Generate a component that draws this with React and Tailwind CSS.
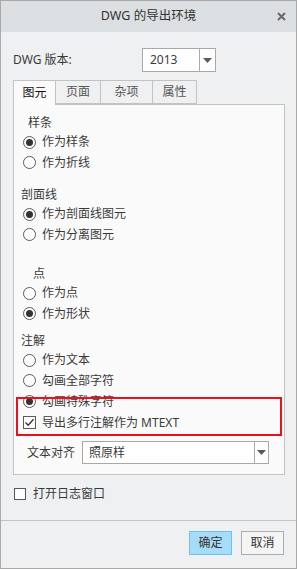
import React from "react";

const font = { fontFamily: '"Noto Sans", "Noto Sans CJK SC", sans-serif' };

function Radio({ checked }) {
  return (
    <span className="flex h-[13px] w-[13px] shrink-0 items-center justify-center rounded-full border border-[#5a5a5a] bg-white">
      {checked && <span className="h-[7px] w-[7px] rounded-full bg-[#333]" />}
    </span>
  );
}

function Check({ checked }) {
  return (
    <span className="flex h-[13px] w-[13px] shrink-0 items-center justify-center border border-[#5a5a5a] bg-white">
      {checked && (
        <svg width="11" height="11" viewBox="0 0 11 11">
          <polyline points="1.5,5.5 4.2,8.3 9.5,2.2" fill="none" stroke="#333" strokeWidth="1.3" />
        </svg>
      )}
    </span>
  );
}

function Arrow() {
  return (
    <svg width="9" height="5" viewBox="0 0 9 5">
      <polygon points="0,0 9,0 4.5,5" fill="#5a5a5a" />
    </svg>
  );
}

function RadioRow({ h, checked, children }) {
  return (
    <div className={`flex items-center pl-[9px] ${h}`}>
      <Radio checked={checked} />
      <span className="ml-[6px] leading-none">{children}</span>
    </div>
  );
}

export default function App() {
  return (
    <div
      style={font}
      className="flex h-[569px] w-[297px] flex-col border border-[#a9a9a9] bg-[#eef0f2] text-[12px] text-[#3a3a3a]"
    >
      {/* title bar */}
      <div className="relative flex h-[31px] shrink-0 items-center justify-center bg-[#dcdfe1]">
        <span className="text-[12.5px] leading-none text-[#333]">DWG 的导出环境</span>
        <span className="absolute right-[8px] top-[8px] flex h-[14px] w-[14px] items-center justify-center">
          <svg width="9" height="9" viewBox="0 0 9 9">
            <path d="M1 1 L8 8 M8 1 L1 8" stroke="#6a6a6a" strokeWidth="2" />
          </svg>
        </span>
      </div>

      <div className="flex flex-col px-[12px]">
        {/* version row */}
        <div className="mt-[16px] flex h-[24px] items-center">
          <span className="w-[129px] leading-none">DWG 版本:</span>
          <div className="flex h-[24px] w-[74px] border border-[#a9a9a9] bg-white">
            <span className="flex flex-1 items-center pl-[7px] leading-none">2013</span>
            <span className="flex w-[16px] items-center justify-center border-l border-[#a9a9a9]">
              <Arrow />
            </span>
          </div>
        </div>

        {/* tabs */}
        <div className="mt-[8px] flex h-[24px]">
          <div className="relative z-10 flex h-[25px] w-[43px] items-center justify-center border border-b-0 border-[#c3c3c3] bg-[#fafafa] leading-none text-[#111]">
            图元
          </div>
          <div className="flex h-[24px] w-[45px] items-center justify-center border-y border-r border-[#c3c3c3] leading-none text-[#555]">
            页面
          </div>
          <div className="flex h-[24px] w-[52px] items-center justify-center border-y border-r border-[#c3c3c3] leading-none text-[#555]">
            杂项
          </div>
          <div className="flex h-[24px] w-[44px] items-center justify-center border-y border-r border-[#c3c3c3] leading-none text-[#555]">
            属性
          </div>
        </div>

        {/* panel */}
        <div className="relative flex h-[371px] w-[272px] flex-col border border-[#c3c3c3] bg-[#fafafa] pt-[8px]">
          <div className="flex h-[19px] items-center pl-[14px] leading-none">样条</div>
          <RadioRow h="h-[20px]" checked>作为样条</RadioRow>
          <RadioRow h="h-[21px]">作为折线</RadioRow>

          <div className="mt-[13px] flex h-[18px] items-center pl-[7px] leading-none">剖面线</div>
          <RadioRow h="h-[20px]" checked>作为剖面线图元</RadioRow>
          <RadioRow h="h-[21px]">作为分离图元</RadioRow>

          <div className="mt-[20px] flex h-[18px] items-center pl-[19px] leading-none">点</div>
          <RadioRow h="h-[20px]">作为点</RadioRow>
          <RadioRow h="h-[21px]" checked>作为形状</RadioRow>

          <div className="mt-[7px] flex h-[19px] items-center pl-[7px] leading-none">注解</div>
          <RadioRow h="h-[20px]">作为文本</RadioRow>
          <RadioRow h="h-[21px]">勾画全部字符</RadioRow>
          <RadioRow h="h-[21px]" checked>勾画特殊字符</RadioRow>
          <div className="flex h-[21px] items-center pl-[9px]">
            <Check checked />
            <span className="ml-[6px] leading-none">导出多行注解作为 MTEXT</span>
          </div>

          <div className="mt-[8px] flex h-[23px] items-center">
            <span className="w-[68px] pl-[13px] leading-none">文本对齐</span>
            <div className="flex h-[23px] w-[187px] border border-[#a9a9a9] bg-white">
              <span className="flex flex-1 items-center pl-[6px] leading-none">照原样</span>
              <span className="flex w-[14px] items-center justify-center border-l border-[#a9a9a9]">
                <Arrow />
              </span>
            </div>
          </div>

          {/* red highlight overlay */}
          <div className="pointer-events-none absolute left-[2px] top-[292px] h-[39px] w-[266px] border-2 border-[#e8121e]" />
        </div>

        {/* log window checkbox */}
        <div className="mt-[9px] flex h-[20px] items-center pl-[1px]">
          <span className="flex h-[12px] w-[12px] items-center justify-center border border-[#5a5a5a] bg-white" />
          <span className="ml-[7px] leading-none">打开日志窗口</span>
        </div>
      </div>

      <div className="mt-[16px] h-px w-full bg-[#c4c4c4]" />

      <div className="mt-[10px] flex justify-end gap-[9px] pr-[12px]">
        <button className="flex h-[24px] w-[43px] items-center justify-center border border-[#6cc3ef] bg-[#a7dcf8] leading-none text-[#333]">
          确定
        </button>
        <button className="flex h-[24px] w-[43px] items-center justify-center border border-[#adadad] bg-[#f5f5f5] leading-none text-[#333]">
          取消
        </button>
      </div>
    </div>
  );
}
